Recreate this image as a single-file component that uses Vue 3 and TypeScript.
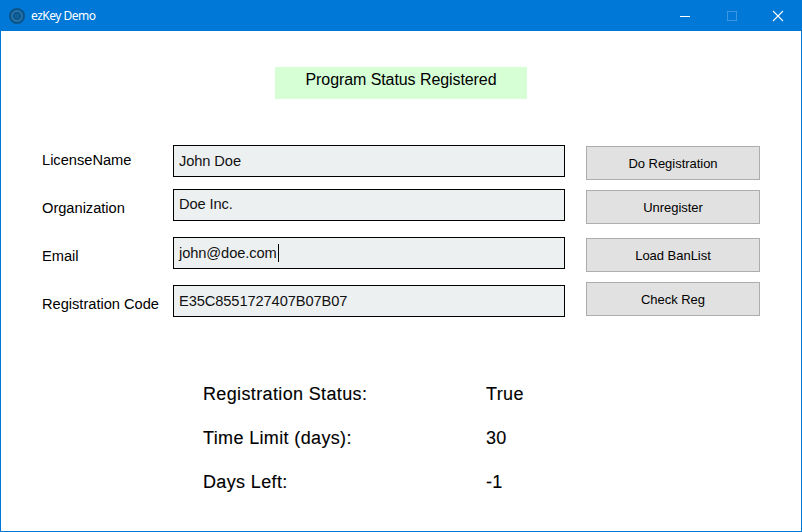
<script setup lang="ts">
const labels: { text: string; cls: string }[] = [
  { text: 'LicenseName', cls: 'l1' },
  { text: 'Organization', cls: 'l2' },
  { text: 'Email', cls: 'l3' },
  { text: 'Registration Code', cls: 'l4' },
]
const fields: { text: string; cls: string; caret?: boolean }[] = [
  { text: 'John Doe', cls: 'f1' },
  { text: 'Doe Inc.', cls: 'f2' },
  { text: 'john@doe.com', cls: 'f3', caret: true },
  { text: 'E35C8551727407B07B07', cls: 'f4' },
]
const buttons: { text: string; cls: string }[] = [
  { text: 'Do Registration', cls: 'b1' },
  { text: 'Unregister', cls: 'b2' },
  { text: 'Load BanList', cls: 'b3' },
  { text: 'Check Reg', cls: 'b4' },
]
const stats: [string, string][] = [
  ['Registration Status:', 'True'],
  ['Time Limit (days):', '30'],
  ['Days Left:', '-1'],
]
</script>

<template>
  <div class="window">
    <header class="titlebar">
      <svg class="logo" width="18" height="18" viewBox="0 0 18 18">
        <circle cx="9" cy="9" r="8" fill="#0d5489" />
        <circle cx="9" cy="9" r="5" fill="none" stroke="#2f7fb8" stroke-width="1.3" />
        <circle cx="9" cy="9" r="2.6" fill="#0f5f99" />
      </svg>
      <span class="title">ezKey Demo</span>
      <div class="controls">
        <svg width="46" height="30" viewBox="0 0 46 30">
          <rect x="17" y="15" width="10" height="1" fill="#fff" />
        </svg>
        <svg width="46" height="30" viewBox="0 0 46 30">
          <rect x="18.5" y="10.5" width="9" height="9" fill="none" stroke="#3b96e3" />
        </svg>
        <svg width="46" height="30" viewBox="0 0 46 30">
          <path d="M18 10 L28 20 M28 10 L18 20" stroke="#fff" stroke-width="1.1" fill="none" />
        </svg>
      </div>
    </header>

    <main class="content">
      <div class="status">Program Status Registered</div>

      <section class="form">
        <div class="labels">
          <div v-for="l in labels" :key="l.text" class="label" :class="l.cls">{{ l.text }}</div>
        </div>
        <div class="fields">
          <div v-for="f in fields" :key="f.text" class="field" :class="f.cls">
            <span>{{ f.text }}</span><span v-if="f.caret" class="caret"></span>
          </div>
        </div>
        <div class="buttons">
          <button v-for="b in buttons" :key="b.text" class="btn" :class="b.cls" type="button">{{ b.text }}</button>
        </div>
      </section>

      <section class="stats">
        <div v-for="s in stats" :key="s[0]" class="stat">
          <span class="stat-name">{{ s[0] }}</span>
          <span class="stat-value">{{ s[1] }}</span>
        </div>
      </section>
    </main>
  </div>
</template>

<style scoped>
.window {
  width: 802px;
  height: 532px;
  box-sizing: border-box;
  border: 1px solid #0078d7;
  border-top: 0;
  background: #fff;
  font-family: "Liberation Sans", Arial, sans-serif;
  color: #000;
  overflow: hidden;
}
.titlebar {
  height: 31px;
  background: #0078d7;
  display: flex;
  align-items: center;
  padding-left: 7px;
  color: #fff;
}
.logo { flex: none; }
.title {
  margin-left: 5px;
  font: 12px "Noto Sans", "Open Sans", sans-serif;
  letter-spacing: -0.5px;
}
.controls {
  margin-left: auto;
  display: flex;
}
.controls svg { display: block; }
.content {
  display: flex;
  flex-direction: column;
}
.status {
  align-self: flex-start;
  margin: 36px 0 0 274px;
  width: 252px;
  height: 32px;
  background: #d6ffd6;
  text-align: center;
  font-size: 16px;
  letter-spacing: -0.08px;
  line-height: 25px;
}
.form {
  display: flex;
  margin-top: 46px;
  padding-left: 41px;
}
.labels {
  width: 131px;
  font-size: 14.67px;
  letter-spacing: -0.02px;
}
.label { height: 32px; line-height: 32px; white-space: nowrap; }
.l1 { margin-top: -1px; }
.l2 { margin-top: 16px; }
.l3 { margin-top: 16px; }
.l4 { margin-top: 16px; }
.fields { width: 392px; }
.field {
  box-sizing: border-box;
  height: 32px;
  border: 1px solid #000;
  background: #edf0f1;
  padding-left: 5px;
  font-size: 14.67px;
  letter-spacing: -0.1px;
  line-height: 30px;
  color: #111;
  display: flex;
  align-items: center;
}
.f2 { margin-top: 12px; line-height: 28px; }
.f2 span { position: relative; top: -1px; }
.f3 { margin-top: 16px; }
.f4 { margin-top: 16px; }
.caret {
  width: 1px;
  height: 18px;
  margin-left: 1px;
  background: #000;
}
.buttons {
  margin-left: 21px;
  width: 174px;
  display: flex;
  flex-direction: column;
  padding-top: 1px;
}
.btn {
  box-sizing: border-box;
  height: 34px;
  padding: 1px 0 0;
  background: #e1e1e1;
  border: 1px solid #adadad;
  border-radius: 0;
  font-family: inherit;
  font-size: 13px;
  letter-spacing: -0.03px;
  color: #000;
}
.b2 { margin-top: 10px; }
.b3 { margin-top: 14px; }
.b4 { margin-top: 10px; }
.stats {
  margin: 59px 0 0 202px;
  display: flex;
  flex-direction: column;
  gap: 14px;
}
.stat {
  display: flex;
  height: 30px;
  line-height: 30px;
  font-size: 18px;
  letter-spacing: 0.36px;
  -webkit-text-stroke: 0.12px #000;
}
.stat-name { width: 283px; }
</style>

<style>
html, body { margin: 0; background: #fff; }
</style>
